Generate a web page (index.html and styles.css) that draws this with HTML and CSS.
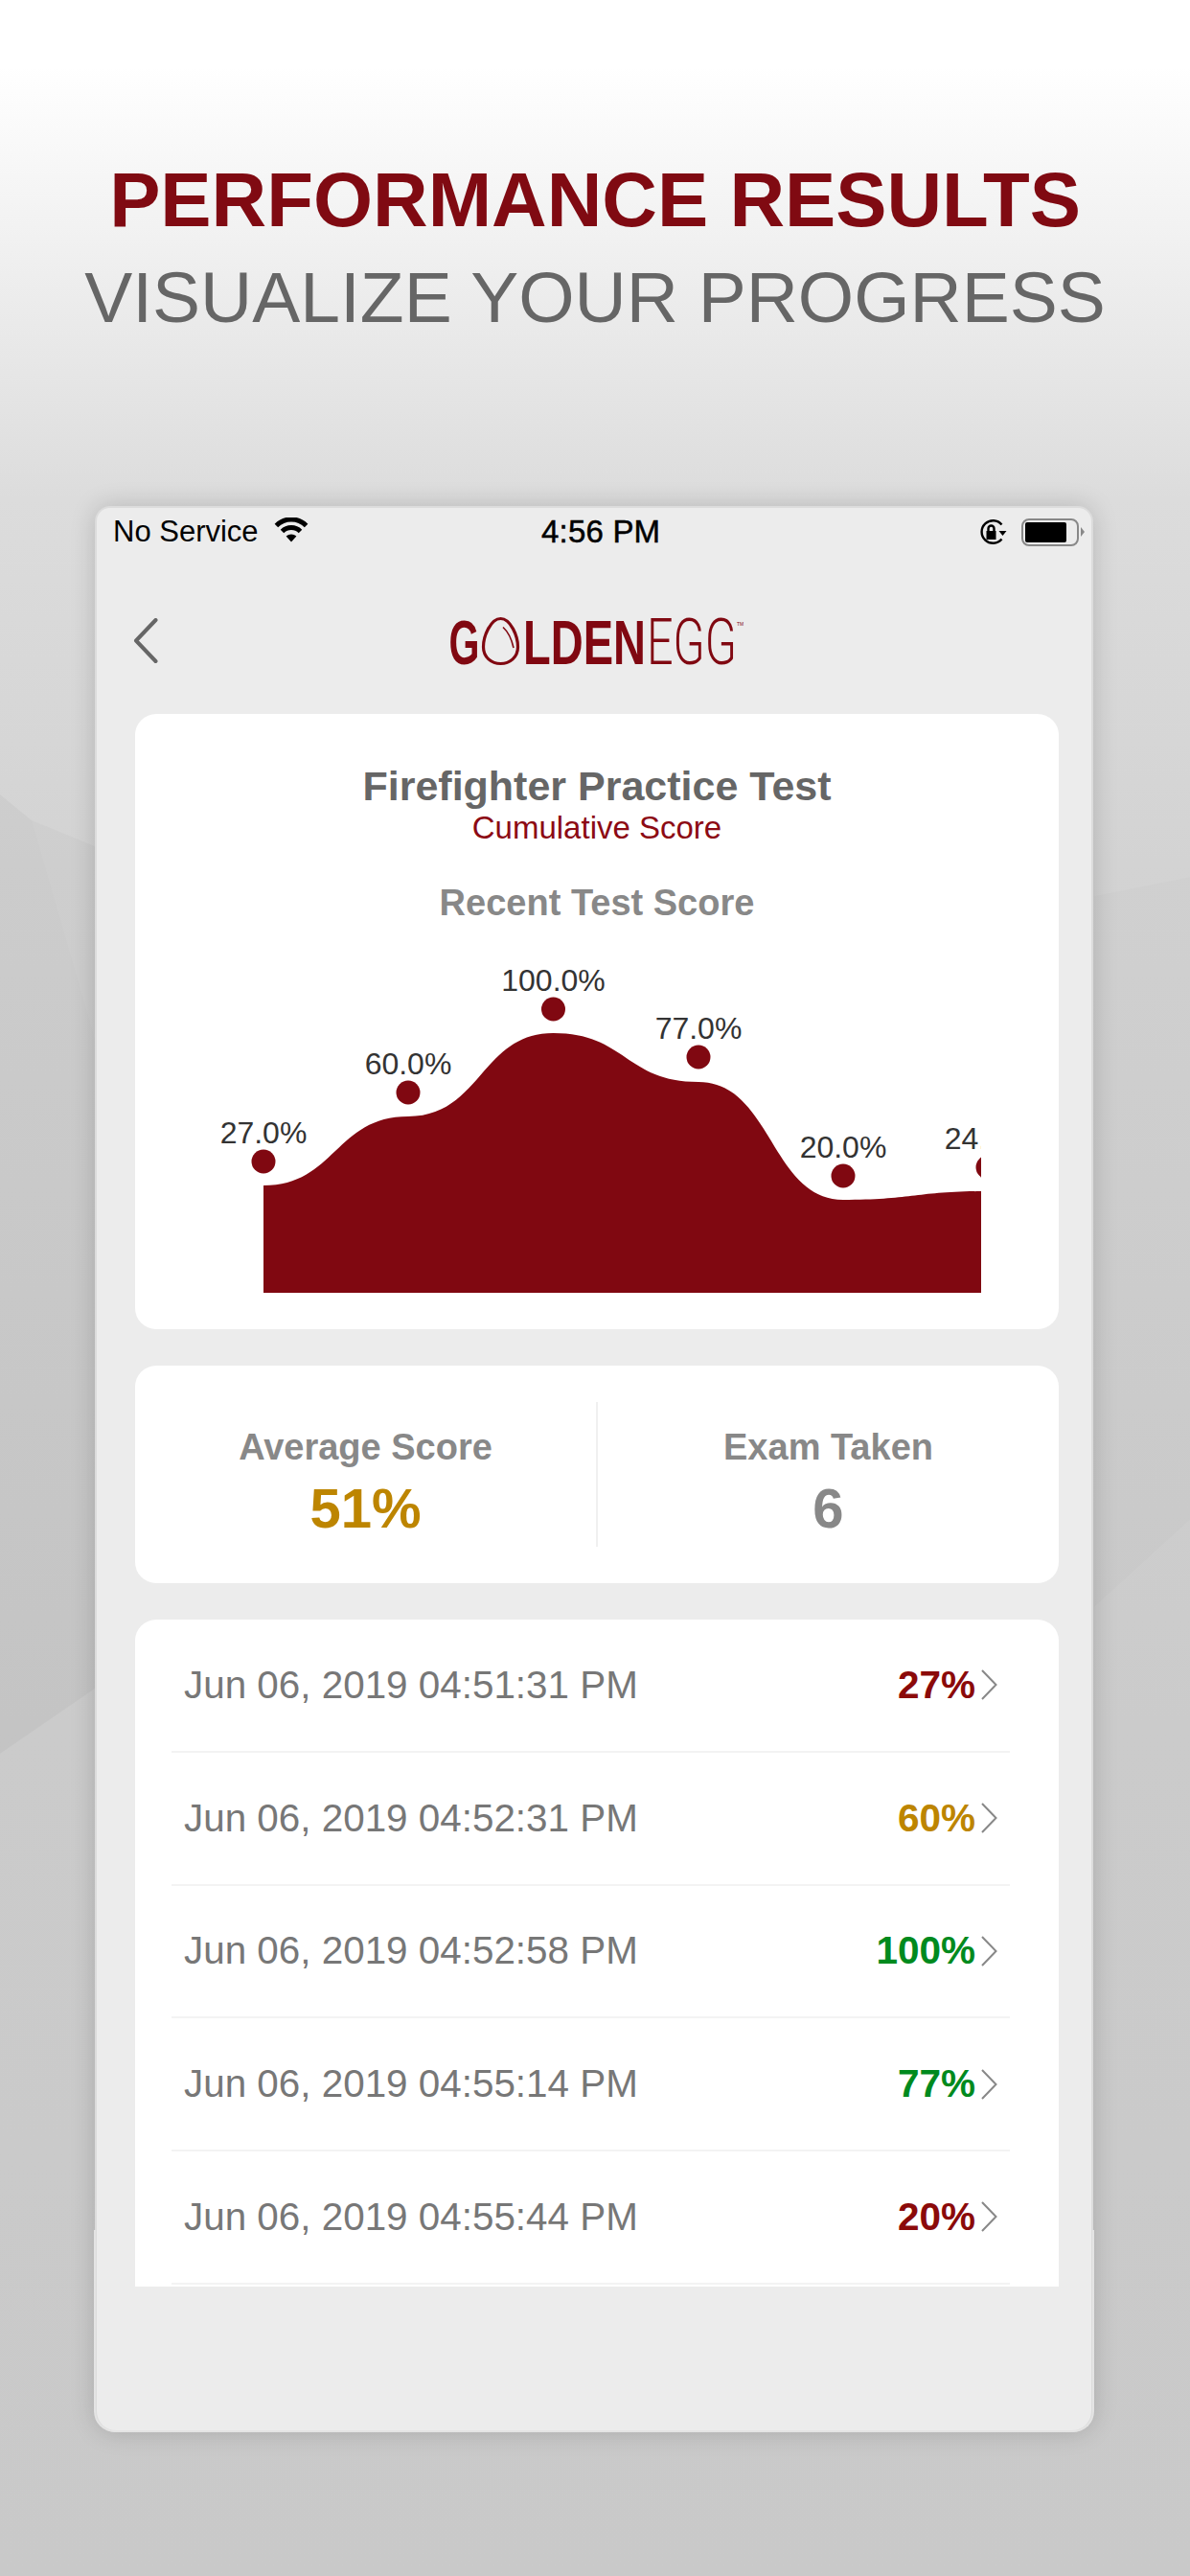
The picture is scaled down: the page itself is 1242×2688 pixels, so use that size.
FILE: index.html
```html
<!DOCTYPE html>
<html lang="en">
<head>
<meta charset="utf-8">
<title>Performance Results</title>
<link rel="stylesheet" href="styles.css">
</head>
<body>
<div class="page">
  <svg class="facets" viewBox="0 0 1242 2688" aria-hidden="true">
    <polygon class="facet-dark" points="0,829 33,856 99,883 99,1762 0,1830"/>
    <polygon class="facet-light" points="33,856 99,883 99,1084"/>
    <polygon class="facet-soft" points="1142,935 1242,915 1242,1586 1142,1677"/>
    <polygon class="facet-faint" points="657,2561 555,2688 1242,2688 1242,2561"/>
  </svg>

  <header class="hero">
    <h1 class="hero-title">PERFORMANCE RESULTS</h1>
    <p class="hero-sub">VISUALIZE YOUR PROGRESS</p>
  </header>

  <section class="phone">
    <div class="status">
      <div class="status-left">
        <span>No Service</span>
        <svg class="wifi" viewBox="0 0 36 26" aria-hidden="true">
          <path class="wifi-arc" d="M2.4 8.4A22 22 0 0 1 33.6 8.4"/>
          <path class="wifi-arc" d="M8.5 14.5A13.5 13.5 0 0 1 27.5 14.5"/>
          <path class="wifi-dot" d="M18 25.5L12.6 19.6A8 8 0 0 1 23.4 19.6Z"/>
        </svg>
      </div>
      <div class="status-time">4:56 PM</div>
      <div class="status-right">
        <svg class="lock" viewBox="0 0 30 28" aria-hidden="true">
          <path class="lock-ring" d="M24.5 6.5A11.8 11.8 0 1 0 24.5 21.5"/>
          <path class="lock-fill" d="M21.5 13H29.5L25.5 18Z"/>
          <path class="lock-fill" d="M8.5 13H18.5V22H8.5Z"/>
          <path class="lock-bow" d="M10.5 13.5V10.5A3 3 0 0 1 16.5 10.5V13.5"/>
        </svg>
        <div class="battery"><div class="battery-level"></div></div>
        <div class="battery-nub"></div>
      </div>
    </div>

    <nav class="nav">
      <svg class="back" viewBox="0 0 26 47" aria-hidden="true">
        <path d="M23.5 2L3 23.5L23.5 45"/>
      </svg>
      <svg class="logo" viewBox="460 640 330 56" role="img" aria-label="Golden Egg">
        <text class="logo-bold" x="468.5" y="692" textLength="32" lengthAdjust="spacingAndGlyphs">G</text>
        <path class="logo-egg" d="M522.5 644.5C533 644.5 540.5 663 540.5 674C540.5 685 532 691.5 522.5 691.5C513 691.5 504.5 685 504.5 674C504.5 663 512 644.5 522.5 644.5Z"/>
        <path class="logo-shine" d="M525 653.5C530 658 534 666 536 675"/>
        <text class="logo-bold" x="546" y="692" textLength="128" lengthAdjust="spacingAndGlyphs">LDEN</text>
        <text class="logo-thin" x="675" y="692" textLength="94" lengthAdjust="spacingAndGlyphs">EGG</text>
        <text class="logo-tm" x="769" y="652" textLength="7" lengthAdjust="spacingAndGlyphs">TM</text>
      </svg>
    </nav>

    <main class="content">
      <section class="card chart-card">
        <h2 class="chart-title">Firefighter Practice Test</h2>
        <p class="chart-sub">Cumulative Score</p>
        <h3 class="chart-head">Recent Test Score</h3>
        <svg class="chart" viewBox="141 964 964 423" aria-label="Recent test scores chart">
          <defs>
            <clipPath id="plot"><rect x="141" y="964" width="883" height="423"/></clipPath>
          </defs>
          <g clip-path="url(#plot)">
            <path class="area" d="M275 1237C350 1237 350 1165 426 1165C502 1165 502 1078 577.5 1078C653 1078 653 1129 729 1129C805 1129 805 1252 880 1252C955 1252 955 1243 1031 1243V1349H275Z"/>
            <circle class="dot" cx="275" cy="1212" r="12.5"/>
            <circle class="dot" cx="426" cy="1140" r="12.5"/>
            <circle class="dot" cx="577.5" cy="1053" r="12.5"/>
            <circle class="dot" cx="729" cy="1103" r="12.5"/>
            <circle class="dot" cx="880" cy="1227" r="12.5"/>
            <circle class="dot" cx="1031" cy="1218" r="12.5"/>
            <text class="pt" x="275" y="1193">27.0%</text>
            <text class="pt" x="426" y="1121">60.0%</text>
            <text class="pt" x="577.5" y="1034">100.0%</text>
            <text class="pt" x="729" y="1084">77.0%</text>
            <text class="pt" x="880" y="1208">20.0%</text>
            <text class="pt" x="1031" y="1199">24.0%</text>
          </g>
        </svg>
      </section>

      <section class="card stats">
        <div class="stat">
          <div class="stat-label">Average Score</div>
          <div class="stat-value gold">51%</div>
        </div>
        <div class="stat stat-divided">
          <div class="stat-label">Exam Taken</div>
          <div class="stat-value grey">6</div>
        </div>
      </section>

      <section class="card list">
        <div class="row"><span class="date">Jun 06, 2019 04:51:31 PM</span><span class="pct red">27%</span><svg class="chev" viewBox="0 0 17 32" aria-hidden="true"><path d="M1 1L15.5 16L1 31"/></svg></div>
        <div class="row"><span class="date">Jun 06, 2019 04:52:31 PM</span><span class="pct gold">60%</span><svg class="chev" viewBox="0 0 17 32" aria-hidden="true"><path d="M1 1L15.5 16L1 31"/></svg></div>
        <div class="row"><span class="date">Jun 06, 2019 04:52:58 PM</span><span class="pct green">100%</span><svg class="chev" viewBox="0 0 17 32" aria-hidden="true"><path d="M1 1L15.5 16L1 31"/></svg></div>
        <div class="row"><span class="date">Jun 06, 2019 04:55:14 PM</span><span class="pct green">77%</span><svg class="chev" viewBox="0 0 17 32" aria-hidden="true"><path d="M1 1L15.5 16L1 31"/></svg></div>
        <div class="row"><span class="date">Jun 06, 2019 04:55:44 PM</span><span class="pct red">20%</span><svg class="chev" viewBox="0 0 17 32" aria-hidden="true"><path d="M1 1L15.5 16L1 31"/></svg></div>
      </section>
    </main>
  </section>
</div>
</body>
</html>
```

FILE: styles.css
```css
* { box-sizing: border-box; margin: 0; padding: 0; }
html, body { width: 1242px; height: 2688px; overflow: hidden; }
body { font-family: "Liberation Sans", Arial, sans-serif; background: #c9c9c9; }

.page {
  position: relative;
  width: 1242px;
  height: 2688px;
  overflow: hidden;
  background: linear-gradient(180deg, #fff 0, #fff 70px, #e9e9e9 350px, #dcdcdc 520px, #d3d3d3 900px, #cbcbcb 1800px, #c9c9c9 2688px);
}
.facets { position: absolute; inset: 0; width: 1242px; height: 2688px; }
.facet-dark { fill: #000; fill-opacity: .03; }
.facet-light { fill: #fff; fill-opacity: .05; }
.facet-soft { fill: #000; fill-opacity: .01; }
.facet-faint { fill: #fff; fill-opacity: .012; }

/* Hero */
.hero { position: relative; height: 528px; padding-top: 159px; text-align: center; }
.hero-title { font-size: 79.8px; line-height: 100px; font-weight: 700; color: #800a12; }
.hero-sub { font-size: 75px; line-height: 100px; margin-top: 1px; color: #666; }

/* Phone frame */
.phone {
  position: relative;
  width: 1042px;
  height: 2010px;
  margin-left: 99px;
  background: #ececec;
  border: 2px solid #dcdcdc;
  border-bottom-color: #dedede;
  border-radius: 16px 16px 22px 22px;
  box-shadow: 0 0 26px rgba(0, 0, 0, .17);
}
.phone::after {
  content: "";
  position: absolute;
  left: -3px;
  right: -3px;
  top: 1797px;
  bottom: -2px;
  border: solid #e4e4e4;
  border-width: 0 2px 2px;
  border-radius: 0 0 22px 22px;
  pointer-events: none;
}

/* Status bar */
.status {
  display: grid;
  grid-template-columns: 464px auto 1fr;
  align-items: center;
  height: 50px;
  color: #000;
  font-size: 31px;
}
.status-left { display: flex; align-items: center; gap: 16px; padding-left: 17px; }
.status-time { font-size: 33px; letter-spacing: .2px; -webkit-text-stroke: .5px #000; }
.status-right { display: flex; align-items: center; justify-content: flex-end; padding-right: 7px; }
.wifi { width: 36px; height: 26px; margin-top: -4px; }
.wifi-arc { fill: none; stroke: #000; stroke-width: 5; }
.wifi-dot { fill: #000; }
.lock { width: 30px; height: 28px; margin-right: 15px; }
.lock-ring, .lock-bow { fill: none; stroke: #000; stroke-width: 2.4; }
.lock-fill { fill: #000; }
.battery {
  width: 60px;
  height: 29px;
  padding: 2px;
  border: 2.5px solid #888;
  border-radius: 8px;
}
.battery-level { width: 43px; height: 100%; background: #000; border-radius: 2px; }
.battery-nub {
  width: 4px;
  height: 10px;
  margin-left: 2px;
  background: #888;
  clip-path: polygon(0 0, 100% 50%, 0 100%);
}

/* Nav */
.nav {
  display: grid;
  grid-template-columns: 321px auto;
  align-items: center;
  height: 165px;
  padding-top: 12px;
  padding-left: 38px;
}
.back { width: 26px; height: 47px; }
.back path { fill: none; stroke: #666; stroke-width: 4; stroke-linecap: round; stroke-linejoin: round; }
.logo { width: 330px; height: 56px; overflow: visible; }
.logo-bold { font-family: "Liberation Sans", Arial, sans-serif; font-weight: 700; font-size: 65px; fill: #800811; }
.logo-thin { font-family: Roboto, "Liberation Sans", sans-serif; font-weight: 300; font-size: 66px; fill: #800811; }
.logo-tm { font-family: "Liberation Sans", Arial, sans-serif; font-size: 6px; fill: #800811; }
.logo-egg, .logo-shine { fill: none; stroke: #800811; }
.logo-egg { stroke-width: 3.2; }
.logo-shine { stroke-width: 1.6; }

/* Cards */
.content { display: flex; flex-direction: column; gap: 38px; padding: 0 34px 0 40px; }
.card { background: #fff; border-radius: 22px; width: 964px; }

.chart-card { height: 642px; padding-top: 49px; text-align: center; }
.chart-title { font-size: 43px; line-height: 52px; font-weight: 700; color: #666; }
.chart-sub { margin-top: 1px; font-size: 33px; line-height: 34px; color: #8c0a14; }
.chart-head { margin-top: 39px; font-size: 38px; line-height: 44px; font-weight: 700; color: #888; }
.chart { display: block; width: 964px; height: 423px; }
.area, .dot { fill: #800811; }
.pt { font-size: 32px; fill: #333; text-anchor: middle; }

.stats { display: grid; grid-template-columns: 481px 483px; height: 227px; padding: 38px 0; }
.stat { padding-top: 25px; text-align: center; }
.stat-divided { border-left: 2px solid #f0f0f0; }
.stat-label { font-size: 38px; line-height: 44px; font-weight: 700; color: #888; }
.stat-value { margin-top: 10px; font-size: 58px; line-height: 64px; font-weight: 700; }

.list { height: 696px; overflow: hidden; border-radius: 22px 22px 0 0; }
.row {
  display: flex;
  align-items: center;
  height: 138.75px;
  margin: 0 51px 0 38px;
  padding: 0 13px;
  border-bottom: 2px solid #f3f3f3;
}
.date { flex: 1; font-size: 40.4px; color: #777; }
.pct { font-size: 40.5px; font-weight: 700; }
.chev { width: 17px; height: 32px; margin-left: 6px; }
.chev path { fill: none; stroke: #888; stroke-width: 2; }

.red { color: #8b0a0a; }
.gold { color: #bd8500; }
.green { color: #008a1e; }
.grey { color: #888; }
```
